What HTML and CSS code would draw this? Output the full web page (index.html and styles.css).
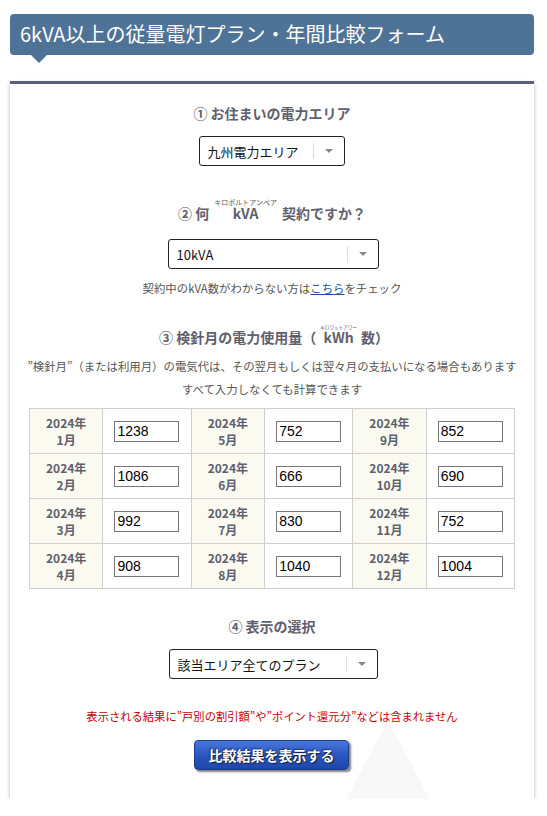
FILE: index.html
```html
<!DOCTYPE html>
<html lang="ja">
<head>
<meta charset="utf-8">
<title>6kVA以上の従量電灯プラン・年間比較フォーム</title>
<link rel="stylesheet" href="styles.css">
</head>
<body>
<div class="page">
  <h1 class="title">6kVA以上の従量電灯プラン・年間比較フォーム</h1>
  <div class="card">
    <div class="deco"></div>
    <section class="sec sec1">
      <h2 class="q">① お住まいの電力エリア</h2>
      <div class="select s1"><span class="val">九州電力エリア</span><span class="arrow"><i></i></span></div>
    </section>
    <section class="sec sec2">
      <h2 class="q">② 何<ruby>kVA<rt>キロボルトアンペア</rt></ruby>契約ですか？</h2>
      <div class="select s2"><span class="val">10kVA</span><span class="arrow"><i></i></span></div>
      <p class="note">契約中のkVA数がわからない方は<a href="#">こちら</a>をチェック</p>
    </section>
    <section class="sec sec3">
      <h2 class="q">③ 検針月の電力使用量<span class="paren">（</span><ruby class="small">kWh<rt>キロワットアワー</rt></ruby>数<span class="paren">）</span></h2>
      <p class="desc">”検針月”（または利用月）の電気代は、その翌月もしくは翌々月の支払いになる場合もあります<br>すべて入力しなくても計算できます</p>
      <table class="usage">
        <tr><th>2024年<br>1月</th><td><input value="1238"></td><th>2024年<br>5月</th><td><input value="752"></td><th>2024年<br>9月</th><td><input value="852"></td></tr>
        <tr><th>2024年<br>2月</th><td><input value="1086"></td><th>2024年<br>6月</th><td><input value="666"></td><th>2024年<br>10月</th><td><input value="690"></td></tr>
        <tr><th>2024年<br>3月</th><td><input value="992"></td><th>2024年<br>7月</th><td><input value="830"></td><th>2024年<br>11月</th><td><input value="752"></td></tr>
        <tr><th>2024年<br>4月</th><td><input value="908"></td><th>2024年<br>8月</th><td><input value="1040"></td><th>2024年<br>12月</th><td><input value="1004"></td></tr>
      </table>
    </section>
    <section class="sec sec4">
      <h2 class="q">④ 表示の選択</h2>
      <div class="select s3"><span class="val">該当エリア全てのプラン</span><span class="arrow"><i></i></span></div>
      <p class="warn">表示される結果に”戸別の割引額”や”ポイント還元分”などは含まれません</p>
      <button class="submit" type="button">比較結果を表示する</button>
    </section>
  </div>
</div>
</body>
</html>
```
FILE: styles.css
```css
html, body {
  margin: 0;
  padding: 0;
  background: #fff;
}
body {
  font-family: "Noto Sans CJK JP", "Noto Sans", sans-serif;
  color: #333;
}
.page {
  padding: 14px 13px 0 10px;
}
.title {
  position: relative;
  margin: 0;
  height: 41px;
  line-height: 40px;
  background: #4f7396;
  color: #fff;
  font-size: 20px;
  font-weight: normal;
  padding-left: 10px;
  border-radius: 4px;
  letter-spacing: 0;
}
.title::after {
  content: "";
  position: absolute;
  left: 21px;
  top: 41px;
  border-left: 8px solid transparent;
  border-right: 8px solid transparent;
  border-top: 8px solid #4f7396;
}
.card {
  position: relative;
  margin-top: 26px;
  border-top: 3px solid #5a6078;
  background: #fff;
  box-shadow: 0 2px 4px rgba(0, 0, 0, 0.28);
  height: 715px;
  overflow: hidden;
}
.deco {
  position: absolute;
  left: 336px;
  top: 636px;
  width: 0;
  height: 0;
  border-left: 42px solid transparent;
  border-right: 42px solid transparent;
  border-bottom: 80px solid #f8f8f8;
}
.sec {
  position: relative;
  display: flex;
  flex-direction: column;
  align-items: center;
}
.q {
  margin: 0;
  font-size: 14px;
  font-weight: bold;
  color: #5f5f6e;
  line-height: 20px;
}
ruby {
  ruby-position: over;
  margin: 0 8px;
}
rt {
  font-size: 7px;
  font-weight: normal;
  color: #555;
  letter-spacing: 0;
}
ruby.small {
  margin: 0 6px 0 8px;
}
ruby.small rt {
  font-size: 4.6px;
}
.paren {
  display: inline-block;
  width: 10px;
  text-align: center;
}
.sec1 { padding-top: 19px; }
.sec1 .q { margin-bottom: 13px; }
.sec2 { padding-top: 32px; }
.sec2 .q { margin-bottom: 16px; }
.sec3 { padding-top: 27px; }
.sec4 { padding-top: 27px; }
.sec4 .q { margin-bottom: 13px; }
.select {
  display: flex;
  align-items: center;
  height: 28px;
  border: 1px solid #222;
  border-radius: 3px;
  background: #fff;
  font-size: 13px;
  color: #111;
}
.select .val {
  flex: 1;
  padding-left: 8px;
}
.select .arrow {
  width: 30px;
  height: 16px;
  border-left: 1px solid #ddd;
  display: flex;
  align-items: center;
  justify-content: center;
}
.select .arrow i {
  display: block;
  border-left: 4px solid transparent;
  border-right: 4px solid transparent;
  border-top: 4px solid #888;
}
.s1 { width: 144px; margin-left: -1px; }
.s2 { width: 209px; margin-left: 2px; }
.s3 { width: 207px; margin-left: 2px; }
.note {
  margin: 11px 0 0;
  font-size: 11.4px;
  color: #555;
  line-height: 17px;
}
.note a {
  color: #1a4fb0;
  text-decoration: underline;
}
.desc {
  margin: 8px 0 0;
  font-size: 11.4px;
  color: #555;
  line-height: 23px;
  text-align: center;
}
.usage {
  margin-top: 7px;
  border-collapse: collapse;
  width: 486px;
}
.usage th, .usage td {
  border: 1px solid #cfcfcf;
  height: 44px;
  padding: 0;
  text-align: center;
}
.usage th {
  width: 72px;
  background: #fafaf0;
  font-size: 12px;
  font-weight: bold;
  color: #5f5f6e;
  line-height: 17px;
}
.usage td {
  width: 87px;
}
.usage input {
  box-sizing: border-box;
  width: 65px;
  height: 21px;
  border: 1px solid #777;
  padding: 0 2px;
  font-family: "Liberation Sans", Arial, sans-serif;
  font-size: 14px;
  color: #000;
  display: block;
  margin: 0 auto;
}
.warn {
  margin: 29px 0 0;
  font-size: 11.3px;
  color: #c80000;
  line-height: 17px;
}
.submit {
  margin-top: 15px;
  width: 155px;
  height: 30px;
  border: 1px solid #1c3d8e;
  border-radius: 4px;
  background: linear-gradient(#4a78da, #2a55bf 50%, #1f47aa);
  color: #fff;
  font-family: "Noto Sans CJK JP", sans-serif;
  font-size: 14px;
  font-weight: bold;
  text-shadow: 1px 1px 1px #102040, -1px -1px 1px #203870;
  box-shadow: 2px 2px 2px rgba(0, 0, 0, 0.5);
  padding: 0;
  margin-left: -1px;
}
```
